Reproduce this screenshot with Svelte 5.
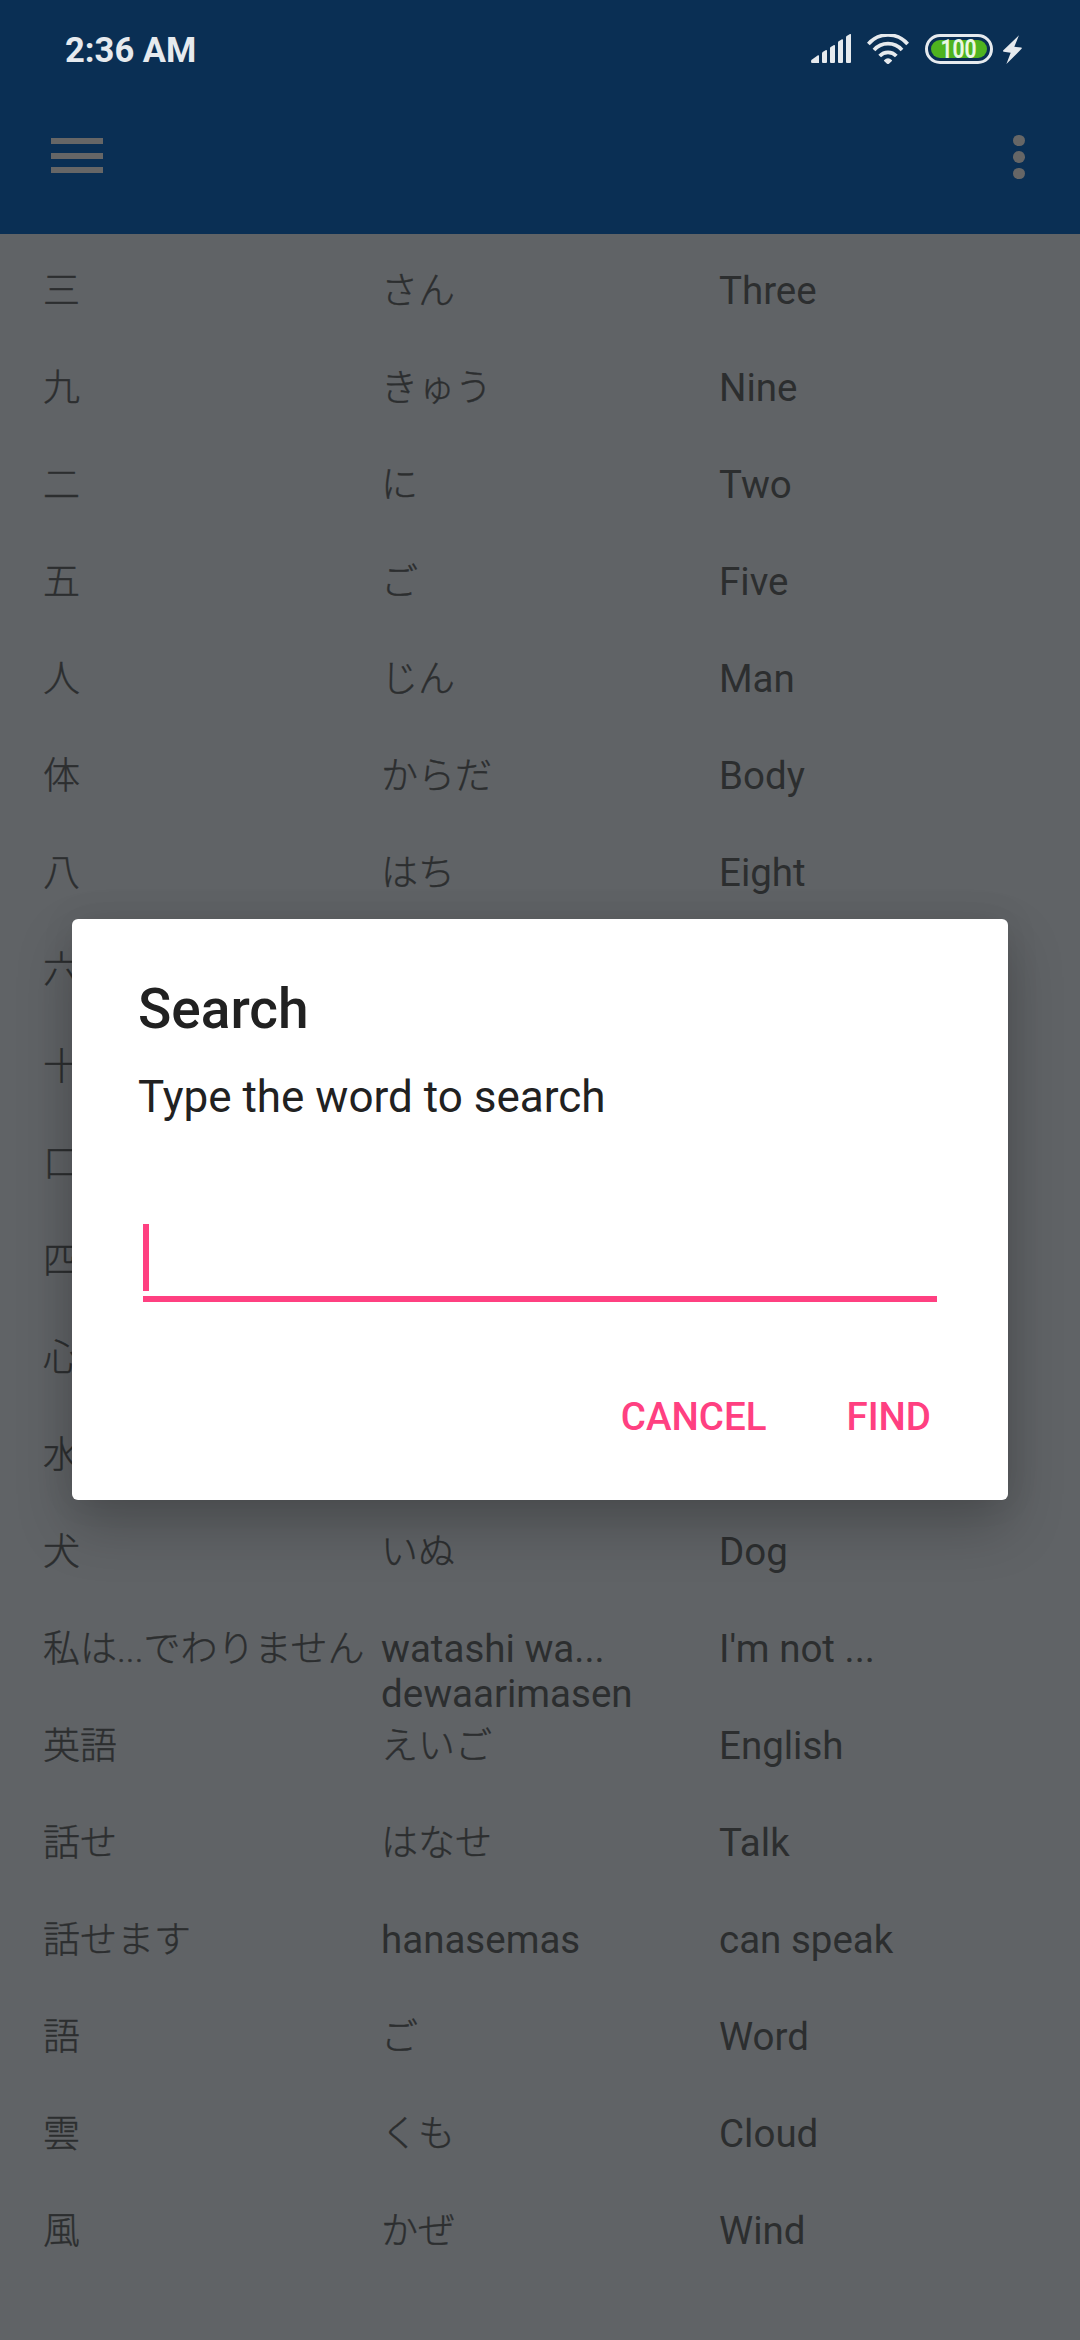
<script>
  // Rows covered by the open dialog only carry their leading character.
  const words = [
    ['三', 'さん', 'Three'],
    ['九', 'きゅう', 'Nine'],
    ['二', 'に', 'Two'],
    ['五', 'ご', 'Five'],
    ['人', 'じん', 'Man'],
    ['体', 'からだ', 'Body'],
    ['八', 'はち', 'Eight'],
    ['六', '', ''],
    ['十', '', ''],
    ['口', '', ''],
    ['四', '', ''],
    ['心', '', ''],
    ['水', '', ''],
    ['犬', 'いぬ', 'Dog'],
    ['私は...でわりません', 'watashi wa... dewaarimasen', "I'm not ..."],
    ['英語', 'えいご', 'English'],
    ['話せ', 'はなせ', 'Talk'],
    ['話せます', 'hanasemas', 'can speak'],
    ['語', 'ご', 'Word'],
    ['雲', 'くも', 'Cloud'],
    ['風', 'かぜ', 'Wind'],
  ];
  const isJapanese = (text) => /[^\x00-\x7f]/.test(text);
</script>

<div class="screen">
  <header>
    <div class="status">
      <span class="time">2:36 AM</span>
      <div class="indicators">
        <svg class="signal" viewBox="93 102 120 87">
          <path d="M94 180 L114 166 Q117 165 117 168 V189 H97 Q93 189 93 185 Z" />
          <path d="M126 160 Q126 158 128 156 L138 150 Q141 149 141 153 V186 Q141 189 138 189 H129 Q126 189 126 186 Z" />
          <path d="M150 145 Q150 142 152 141 L162 135 Q165 134 165 138 V186 Q165 189 162 189 H153 Q150 189 150 186 Z" />
          <path d="M174 128 Q174 125 176 124 L186 118 Q189 117 189 121 V186 Q189 189 186 189 H177 Q174 189 174 186 Z" />
          <path d="M198 113 Q198 109 200 108 L210 102 Q213 101 213 105 V186 Q213 189 210 189 H201 Q198 189 198 186 Z" />
        </svg>
        <svg class="wifi" viewBox="261 102 126 90">
          <g class="waves">
            <path d="M265 132 A78 78 0 0 1 383 132" />
            <path d="M282 150 A56 56 0 0 1 366 150" />
            <path d="M299 168 A34 34 0 0 1 349 168" />
          </g>
          <path d="M312 181 Q324 169 336 181 Q337 182 335 184 L327 191 Q324 193 321 191 L313 184 Q311 182 312 181 Z" />
        </svg>
        <div class="battery"><div class="level"><span>100</span></div></div>
        <svg class="bolt" viewBox="669 103 57 88">
          <path d="M717 104 L669 150 Q668 153 671 154 L692 157 L679 191 L725 145 Q727 142 724 141 L703 139 Z" />
        </svg>
      </div>
    </div>
    <div class="toolbar">
      <div class="menu"><i></i><i></i><i></i></div>
      <div class="more"><i></i><i></i><i></i></div>
    </div>
  </header>

  <main>
    {#each words as row}
      <div class="row">
        {#each row as cell}
          <div class="cell"><span class:ja={isJapanese(cell)}>{cell}</span></div>
        {/each}
      </div>
    {/each}
  </main>

  <div class="dialog" role="dialog" aria-label="Search">
    <h1>Search</h1>
    <p>Type the word to search</p>
    <div class="field"><div class="caret"></div></div>
    <div class="actions"><span>CANCEL</span><span>FIND</span></div>
  </div>
</div>

<style>
  :global(body) {
    margin: 0;
  }
  .screen {
    position: relative;
    width: 1080px;
    height: 2340px;
    overflow: hidden;
    background: #606366;
    font-family: Roboto, 'Noto Sans CJK JP', sans-serif;
  }
  header {
    height: 234px;
    box-sizing: border-box;
    background: #0a2f54;
    color: #e6eaee;
  }
  .status {
    display: flex;
    justify-content: space-between;
    align-items: flex-start;
    height: 78px;
    padding: 0 58px 0 65px;
  }
  .time {
    margin-top: 30px;
    font-size: 34.6px;
    line-height: 41px;
    font-weight: 700;
  }
  .indicators {
    display: flex;
    align-items: flex-start;
    padding-top: 34px;
  }
  svg {
    display: block;
    fill: #e6eaee;
  }
  .signal {
    width: 40px;
    height: 29px;
    margin-right: 16px;
  }
  .wifi {
    width: 42px;
    height: 30px;
    margin-right: 16px;
  }
  .waves {
    fill: none;
    stroke: #e6eaee;
    stroke-width: 11;
  }
  .battery {
    box-sizing: border-box;
    width: 68px;
    height: 30px;
    border: 3px solid #e6eaee;
    border-radius: 15px;
    padding: 3px;
    margin-right: 10px;
  }
  .level {
    display: flex;
    justify-content: center;
    height: 18px;
    border-radius: 9px;
    background: #4fb31f;
    color: #eaf7e2;
    font-size: 25px;
    line-height: 19px;
    font-weight: 700;
  }
  .level span {
    transform: scaleX(0.84);
  }
  .bolt {
    width: 19px;
    height: 29px;
    margin-top: 0.5px;
  }
  .toolbar {
    display: flex;
    justify-content: space-between;
    padding: 56.5px 55px 0 51px;
  }
  .menu {
    display: grid;
    align-content: start;
    gap: 8.5px;
    width: 52px;
    padding-top: 3.5px;
  }
  .menu i {
    height: 6px;
    background: #666;
  }
  .more {
    display: grid;
    gap: 5px;
  }
  .more i {
    width: 11.6px;
    height: 11.6px;
    border-radius: 50%;
    background: #666;
  }
  main {
    padding: 34px 23px 0 43px;
  }
  .row {
    display: grid;
    grid-template-columns: repeat(3, 338px);
    height: 97px;
    color: #2c2e2f;
    font-size: 38.5px;
    line-height: 45px;
  }
  .cell {
    padding-right: 10px;
    height: 45px;
  }
  .ja {
    font-size: 37px;
    font-weight: 300;
    -webkit-text-stroke: 0.4px #2c2e2f;
    white-space: nowrap;
  }
  .dialog {
    position: absolute;
    left: 72px;
    top: 919px;
    width: 936px;
    height: 581px;
    box-sizing: border-box;
    padding: 57px 66px 0;
    border-radius: 6px;
    background: #fff;
    color: #212121;
    box-shadow: 0 26px 56px rgba(0, 0, 0, 0.22), 0 0 34px rgba(0, 0, 0, 0.08);
  }
  h1 {
    margin: 0;
    font-size: 55px;
    line-height: 66px;
    font-weight: 500;
  }
  p {
    margin: 29px 0 0;
    font-size: 44px;
    line-height: 52px;
  }
  .field {
    margin: 101px 5px 0;
    height: 72px;
    border-bottom: 6px solid #ff4081;
  }
  .caret {
    width: 6px;
    height: 67px;
    background: #ff4081;
  }
  .actions {
    display: flex;
    justify-content: flex-end;
    gap: 80px;
    margin-top: 92px;
    padding-right: 11px;
    color: #ff4081;
    font-size: 38.5px;
    line-height: 45px;
    font-weight: 500;
  }
</style>
